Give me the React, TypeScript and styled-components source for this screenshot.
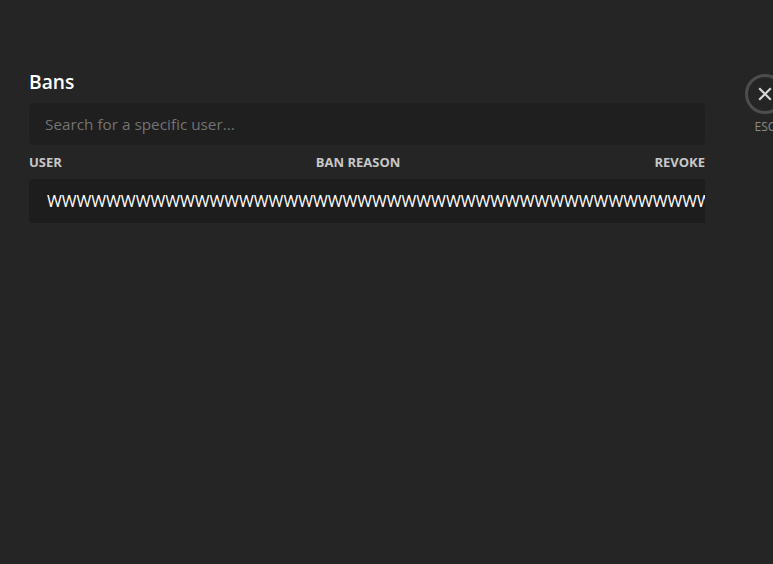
import React from "react";
import styled, { createGlobalStyle } from "styled-components";

const Global = createGlobalStyle`
  html, body { margin: 0; padding: 0; height: 100%; background: #252525; overflow: hidden; }
  body { font-family: "Open Sans", "Noto Sans", sans-serif; }
  #root { height: 100%; }
`;

const Page = styled.div`
  display: flex;
  align-items: flex-start;
  gap: 40px;
  width: 773px;
  height: 564px;
  box-sizing: border-box;
  padding: 70px 0 0 29px;
  overflow: hidden;
  background: #252525;
`;

const Content = styled.main`
  flex: 0 0 676px;
  width: 676px;
  display: flex;
  flex-direction: column;
`;

const Title = styled.h2`
  margin: 0 0 9px;
  height: 24px;
  font-size: 19.2px;
  line-height: 24px;
  font-weight: 600;
  color: #fff;
`;

const Search = styled.input`
  box-sizing: border-box;
  width: 100%;
  height: 42px;
  padding: 0 16px;
  border: 0;
  border-radius: 5px;
  outline: none;
  background: #1f1f1f;
  color: #fff;
  font: 400 15.3px "Open Sans", sans-serif;
  &::placeholder { color: #737373; opacity: 1; }
`;

const Header = styled.div`
  display: flex;
  justify-content: space-between;
  margin-top: 9px;
  height: 16px;
  font-size: 13px;
  line-height: 16px;
  font-weight: 700;
  color: #c7c7c7;
`;

const HeaderCell = styled.span``;

const Row = styled.div`
  box-sizing: border-box;
  margin-top: 9px;
  height: 44px;
  padding: 0 0 0 18px;
  display: flex;
  align-items: center;
  background: #1d1d1d;
  border-radius: 4px 0 0 4px;
  overflow: hidden;
`;

const UserName = styled.span`
  white-space: nowrap;
  font-size: 16px;
  color: #fff;
`;

const Close = styled.aside`
  flex: 0 0 40px;
  display: flex;
  flex-direction: column;
  align-items: center;
  margin-top: 4px;
`;

const CloseCircle = styled.div`
  box-sizing: border-box;
  width: 40px;
  height: 40px;
  border: 3px solid #4d4d4d;
  border-radius: 50%;
  display: flex;
  align-items: center;
  justify-content: center;
`;

const EscLabel = styled.span`
  margin-top: 4px;
  font-size: 12px;
  line-height: 18px;
  color: #8a8a8a;
`;

export default function App() {
  return (
    <Page>
      <Global />
      <Content>
        <Title>Bans</Title>
        <Search placeholder="Search for a specific user..." />
        <Header>
          <HeaderCell>USER</HeaderCell>
          <HeaderCell>BAN REASON</HeaderCell>
          <HeaderCell>REVOKE</HeaderCell>
        </Header>
        <Row>
          <UserName>{"W".repeat(50)}</UserName>
        </Row>
      </Content>
      <Close>
        <CloseCircle>
          <svg width="18" height="18" viewBox="0 0 18 18" fill="none">
            <path d="M3.2 3.2 L14.8 14.8 M14.8 3.2 L3.2 14.8" stroke="#d6d6d6" strokeWidth="2.2" />
          </svg>
        </CloseCircle>
        <EscLabel>ESC</EscLabel>
      </Close>
    </Page>
  );
}
